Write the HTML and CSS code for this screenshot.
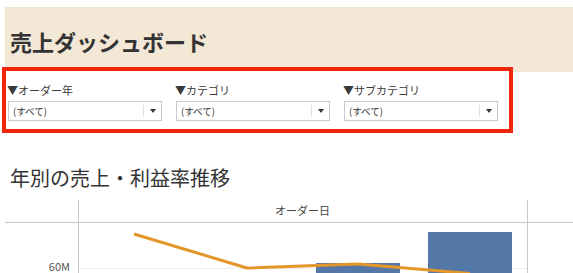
FILE: index.html
```html
<!DOCTYPE html>
<html>
<head>
  <meta charset="utf-8">
  <title>売上ダッシュボード</title>
  <link rel="stylesheet" href="styles.css">
</head>
<body>
  <header class="header">
    <h1>売上ダッシュボード</h1>
  </header>

  <section class="filters">
    <div class="filter">
      <p class="filter-label">▼オーダー年</p>
      <div class="select"><span class="select-value">(すべて)</span><span class="select-arrow"><i></i></span></div>
    </div>
    <div class="filter">
      <p class="filter-label">▼カテゴリ</p>
      <div class="select"><span class="select-value">(すべて)</span><span class="select-arrow"><i></i></span></div>
    </div>
    <div class="filter">
      <p class="filter-label">▼サブカテゴリ</p>
      <div class="select"><span class="select-value">(すべて)</span><span class="select-arrow"><i></i></span></div>
    </div>
  </section>

  <h2 class="chart-title">年別の売上・利益率推移</h2>

  <svg class="chart" width="573" height="73" viewBox="0 0 573 73">
    <line class="axis" x1="78.5" y1="0" x2="78.5" y2="73"></line>
    <line class="axis" x1="527.5" y1="0" x2="527.5" y2="73"></line>
    <line class="axis" x1="5" y1="22.5" x2="573" y2="22.5"></line>
    <line class="grid" x1="79" y1="68.5" x2="527" y2="68.5"></line>
    <text class="axis-title" x="302.5" y="15" text-anchor="middle">オーダー日</text>
    <text class="tick" x="70" y="71" text-anchor="end">60M</text>

    <rect class="bar" x="92" y="90" width="84" height="40"></rect>
    <rect class="bar" x="204" y="85" width="84" height="40"></rect>
    <rect class="bar" x="316" y="63" width="84" height="40"></rect>
    <rect class="bar" x="428" y="32" width="84" height="60"></rect>

    <polyline class="profit" points="134,34 247,68 358,64 470,73.5"></polyline>
  </svg>
</body>
</html>
```

FILE: styles.css
```css
html {
  background-color: #fff;
}

body {
  margin: 0;
  color: #333;
  font-family: "Noto Sans CJK JP", "Noto Sans", sans-serif;
}

p {
  margin: 0;
}

.header {
  margin: 7px 0 0 5px;
  height: 65px;
  padding-left: 5px;
  background-color: #f3e8d6;
  box-sizing: border-box;
}

.header h1 {
  margin: 0;
  padding-top: 23px;
  font-size: 22px;
  line-height: 22px;
  font-weight: bold;
  color: #333;
}

.filters {
  position: relative;
  display: flex;
  gap: 13px;
  width: 502px;
  margin: -5px 0 0 2px;
  padding: 12px 0 8px 1px;
  border: 4px solid #f0260c;
  box-sizing: content-box;
  background-color: #fff;
}

.filter {
  width: 155px;
}

.filter-label {
  font-size: 11px;
  line-height: 14px;
  color: #3a3a3a;
  white-space: nowrap;
}

.select {
  display: flex;
  align-items: center;
  height: 20px;
  margin: 4px 0 0 1px;
  border: 1px solid #cacaca;
  box-sizing: border-box;
  background-color: #fff;
}

.select-value {
  flex: 1;
  padding-left: 4px;
  font-size: 9.5px;
  color: #333;
}

.select-arrow {
  display: flex;
  align-items: center;
  justify-content: center;
  width: 17px;
  height: 12px;
  border-left: 1px solid #ddd;
}

.select-arrow i {
  width: 0;
  height: 0;
  border-top: 4px solid #333;
  border-left: 3px solid transparent;
  border-right: 3px solid transparent;
}

.chart-title {
  margin: 33px 0 10px 10px;
  font-size: 20px;
  line-height: 24px;
  font-weight: normal;
  color: #333;
}

.chart {
  display: block;
}

.chart .axis {
  stroke: #c8c8c8;
  stroke-width: 1;
}

.chart .grid {
  stroke: #eeeeee;
  stroke-width: 1;
}

.chart text {
  font-family: "Noto Sans CJK JP", "Noto Sans", sans-serif;
  font-size: 11px;
}

.chart .axis-title {
  fill: #444;
}

.chart .tick {
  fill: #555;
}

.chart .bar {
  fill: #5377a7;
}

.chart .profit {
  fill: none;
  stroke: #e3962a;
  stroke-width: 3;
  stroke-linejoin: round;
}
```
